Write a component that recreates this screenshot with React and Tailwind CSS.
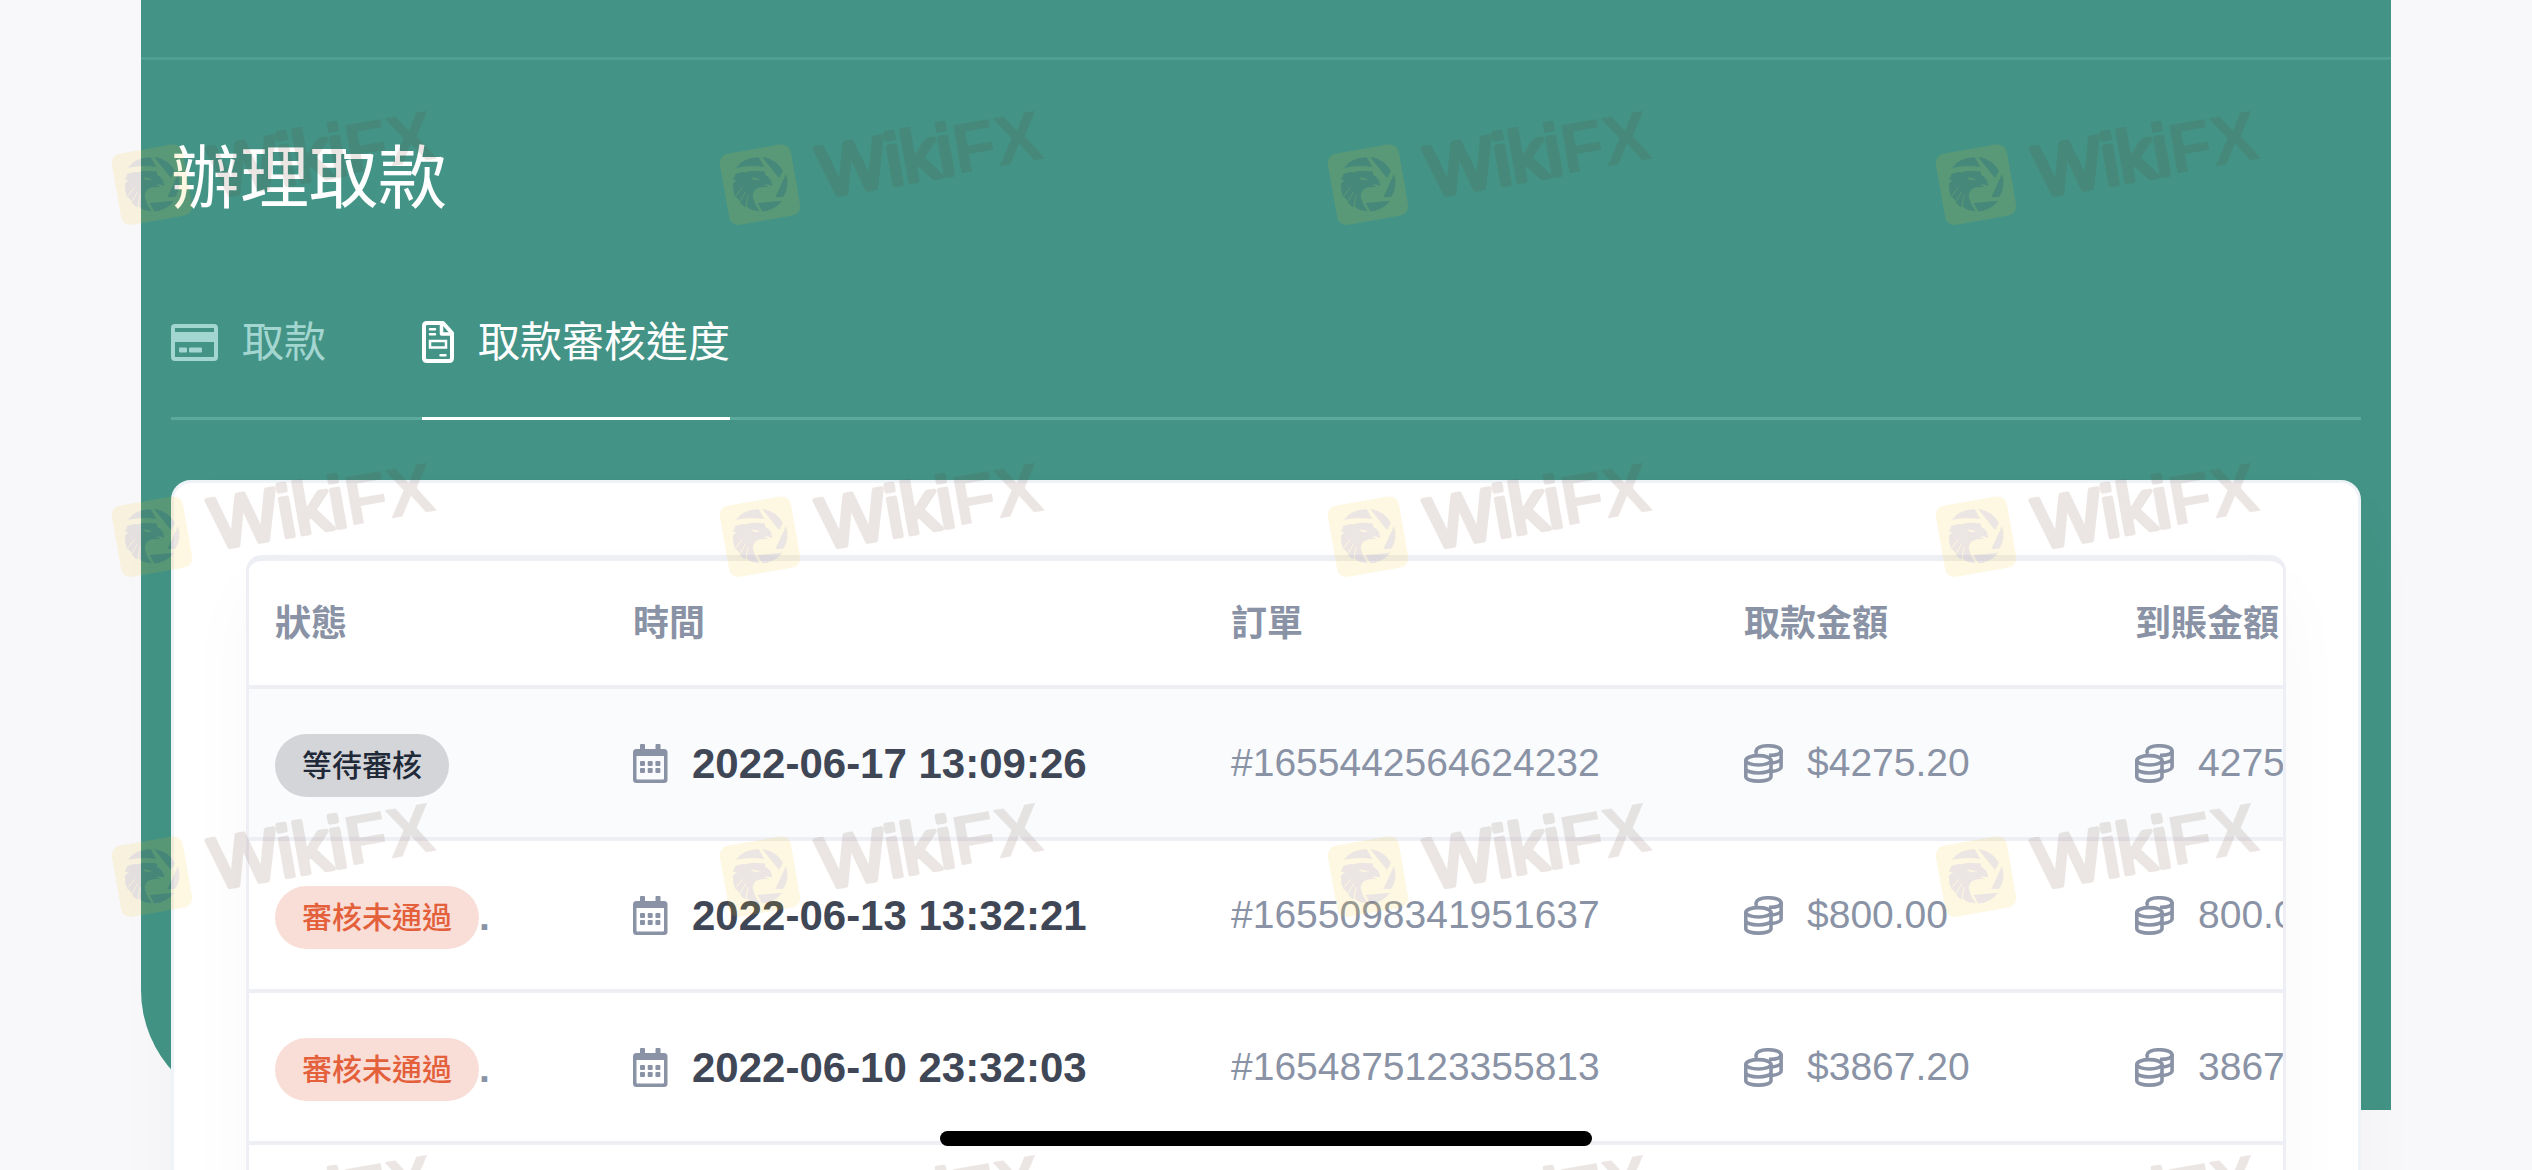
const rows = [
  { status: "pending", time: "2022-06-17 13:09:26", order: "#1655442564624232", amount: "$4275.20", received: "4275.20" },
  { status: "rejected", time: "2022-06-13 13:32:21", order: "#1655098341951637", amount: "$800.00", received: "800.00" },
  { status: "rejected", time: "2022-06-10 23:32:03", order: "#1654875123355813", amount: "$3867.20", received: "3867.20" },
];

const columns = ["狀態", "時間", "訂單", "取款金額", "到賬金額"];

function CardIcon() {
  return (
    <svg width="47" height="37" viewBox="0 0 47 37" className="shrink-0" aria-hidden="true">
      <path
        fill="currentColor"
        fillRule="evenodd"
        d="M4 0H43Q47 0 47 4V33Q47 37 43 37H4Q0 37 0 33V4Q0 0 4 0ZM4 4V8H43V4ZM4 18V33H43V18Z"
      />
      <rect x="8" y="23.500" width="8" height="5" rx="1" fill="currentColor" />
      <rect x="18" y="23.500" width="13" height="5" rx="1" fill="currentColor" />
    </svg>
  );
}

function DocumentIcon() {
  return (
    <svg width="32" height="42" viewBox="0 0 32 42" className="shrink-0" fill="none" stroke="currentColor" aria-hidden="true">
      <path strokeWidth="4" strokeLinejoin="round" d="M5 2H21L30 12V37Q30 40 27 40H5Q2 40 2 37V5Q2 2 5 2Z" />
      <path strokeWidth="3.500" strokeLinejoin="round" d="M19.500 3V13H30" />
      <path strokeWidth="2.500" strokeLinecap="round" d="M8 8.300H13M8 13.300H13M18.500 34.300H23.500" />
      <rect x="8" y="20" width="16" height="6.500" strokeWidth="2.500" />
    </svg>
  );
}

function CalendarIcon() {
  return (
    <svg width="35" height="39" viewBox="0 0 35 39" className="shrink-0" fill="currentColor" aria-hidden="true">
      <path
        fillRule="evenodd"
        d="M7 5V1Q7 0 8 0H11Q12 0 12 1V5H22.500V1Q22.500 0 23.500 0H26.500Q27.500 0 27.500 1V5H31Q34.500 5 34.500 8.500V35.500Q34.500 39 31 39H3.500Q0 39 0 35.500V8.500Q0 5 3.500 5ZM3.500 12V34.500Q3.500 35.500 4.500 35.500H30Q31 35.500 31 34.500V12Z"
      />
      {[7, 14.7, 22.4].map((x) =>
        [17, 24].map((y) => <rect key={x + "-" + y} x={x} y={y} width="5" height="5" rx="1" />)
      )}
    </svg>
  );
}

function CoinsIcon() {
  return (
    <svg width="39" height="39" viewBox="0 0 39 39" className="shrink-0" fill="none" stroke="currentColor" strokeWidth="3.600" aria-hidden="true">
      <path d="M13 10C11.500 8.500 11.500 5 15 3.400C20 1.200 29 1.200 34 3.400C38 5.200 38 8.600 34 10.200C31 11.200 28 11.400 25 11.300" />
      <path d="M37.100 6V23Q37 26 28 27.500M37.100 14.500Q37 17.500 28 19" />
      <ellipse cx="14.400" cy="16.300" rx="12.600" ry="4.700" />
      <path d="M1.800 16V32.500C1.800 38.700 27 38.700 27 32.500V16M1.800 24.300C1.800 30.500 27 30.500 27 24.300" />
    </svg>
  );
}

function Watermark() {
  return (
    <svg viewBox="0 0 1140 450" width="380" height="150" className="shrink-0 opacity-12">
      <rect x="72" y="176" width="216" height="216" rx="28" fill="#f8c010" transform="rotate(-10 180 284)" />
      <g fill="#603828">
        <path d="M108 233Q130 203 176 201L193 231Q150 224 108 233Z" />
        <path d="M186 201Q232 208 249 244L237 264Z" />
        <path d="M258 252Q270 290 250 320L226 322Z" />
        <path d="M246 332Q225 362 186 364L173 339Z" />
        <path d="M106 252Q126 244 138 247Q152 240 172 243L192 244Q197 249 195 254Q214 262 217 287Q204 282 190 284L208 292Q163 286 158 314Q162 342 180 364Q160 362 148 356L140 348L136 352Q120 342 114 326L106 320Q98 304 100 292L98 282L110 270L99 270Z" />
      </g>
      <g fill="none" stroke="#f8c010">
        <path d="M153 262L178 267Q170 272 160 268Z" fill="#f8c010" strokeWidth="1" />
        <path d="M108 316L128 292M119 336L138 304M138 350L144 316" strokeWidth="3" />
      </g>
      <text
        x="0"
        y="0"
        transform="translate(370 322) rotate(-10)"
        fill="#603828"
        stroke="#603828"
        strokeLinejoin="round"
        fontFamily="'Liberation Sans', Arial, sans-serif"
      >
        <tspan fontSize="216" strokeWidth="15">Wiki</tspan>
        <tspan fontSize="210" fontWeight="700" strokeWidth="1">FX</tspan>
      </text>
    </svg>
  );
}

function WatermarkRow({ tall }) {
  return (
    <div className={tall ? "flex h-[352px] gap-[228px]" : "flex h-[340px] gap-[228px]"}>
      {[0, 1, 2, 3].map((i) => (
        <Watermark key={i} />
      ))}
    </div>
  );
}

function StatusBadge({ status }) {
  if (status === "pending") {
    return (
      <span className="flex h-[63px] items-center rounded-full bg-[#d4d5d9] px-[27px] text-[30px] font-medium text-[#1f2937]">
        等待審核
      </span>
    );
  }
  return (
    <>
      <span className="flex h-[63px] items-center rounded-full bg-[#f9ddd7] px-[27px] text-[30px] font-medium text-[#e3603b]">
        審核未通過
      </span>
      <span className="font-bold">.</span>
    </>
  );
}

export default function App() {
  return (
    <div className="relative h-screen overflow-hidden bg-[#f8f8fb] px-[141px] font-['Liberation_Sans','Noto_Sans_CJK_TC',sans-serif]">
      <main className="h-[1110px] rounded-bl-[120px] bg-[#439486]">
        <div className="h-[60px] border-b-3 border-[#4f9f92]" />
        <div className="px-[30px] pt-[78px]">
          <h1 className="text-[69px] leading-[84px] font-normal text-white">辦理取款</h1>
          <nav className="mt-[42px] flex h-[156px] gap-[96px] text-[42px] font-normal shadow-[inset_0_-3px_0_#5caa9e]">
            <button type="button" className="flex items-center gap-6 text-[#a3d6d0]">
              <CardIcon />
              取款
            </button>
            <button type="button" className="flex items-center gap-6 text-white shadow-[inset_0_-3px_0_#fff]">
              <DocumentIcon />
              取款審核進度
            </button>
          </nav>

          <section className="mt-[60px] rounded-[20px] border-3 border-[#eef3f7] bg-white p-[72px] shadow-[0_36px_72px_rgba(18,38,63,0.03)]">
            <div className="overflow-hidden rounded-[16px] border-x-3 border-t-6 border-[#eeeff5] bg-white pb-[152px] shadow-[0_36px_72px_rgba(18,38,63,0.03)]">
              <table className="w-full min-w-[2251px] table-fixed border-separate border-spacing-0 text-left text-[39px] text-[#8a93a5]">
                <colgroup>
                  <col className="w-[358px]" />
                  <col className="w-[598px]" />
                  <col className="w-[513px]" />
                  <col className="w-[391px]" />
                  <col className="w-[391px]" />
                </colgroup>
                <thead>
                  <tr>
                    {columns.map((c) => (
                      <th key={c} className="h-[128px] border-b-4 border-[#eeeff5] px-[26px] pt-[2px] text-[36px] font-bold">
                        {c}
                      </th>
                    ))}
                  </tr>
                </thead>
                <tbody>
                  {rows.map((r) => (
                    <tr key={r.order} className="first:bg-[#f9fbfd] [&>td]:h-[152px] [&>td]:border-b-4 [&>td]:border-[#eeeff5] [&>td]:px-[26px] [&>td]:whitespace-nowrap">
                      <td>
                        <span className="flex items-center pt-1">
                          <StatusBadge status={r.status} />
                        </span>
                      </td>
                      <td>
                        <span className="flex items-center gap-6">
                          <CalendarIcon />
                          <time className="text-[42px] font-bold text-[#3f4756]">{r.time}</time>
                        </span>
                      </td>
                      <td>{r.order}</td>
                      <td>
                        <span className="flex items-center gap-6">
                          <CoinsIcon />
                          {r.amount}
                        </span>
                      </td>
                      <td>
                        <span className="flex items-center gap-6">
                          <CoinsIcon />
                          {r.received}
                        </span>
                      </td>
                    </tr>
                  ))}
                </tbody>
              </table>
            </div>
          </section>
        </div>
      </main>

      <div className="pointer-events-none absolute inset-0 overflow-hidden pt-[90px] pl-[92px]" aria-hidden="true">
        <WatermarkRow tall />
        <WatermarkRow />
        <WatermarkRow tall />
        <WatermarkRow />
      </div>

      <div className="absolute bottom-6 left-1/2 h-[15px] w-[652px] -translate-x-1/2 rounded-full bg-black" />
    </div>
  );
}
